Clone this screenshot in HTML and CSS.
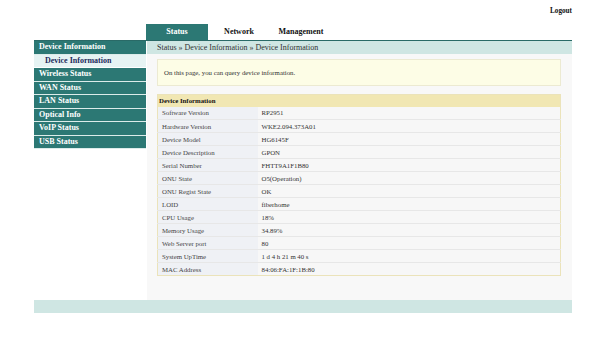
FILE: index.html
```html
<!DOCTYPE html>
<html lang="en">
<head>
  <meta charset="UTF-8">
  <title>Device Information</title>
  <link rel="stylesheet" href="styles.css">
</head>
<body>
  <div class="page">
    <div class="topbar">
      <a href="#" class="logout">Logout</a>
    </div>

    <div class="menu">
      <a href="#" class="tab active">Status</a>
      <a href="#" class="tab">Network</a>
      <a href="#" class="tab">Management</a>
    </div>

    <div class="frame">
      <div class="sidebar">
        <div class="side-head">Device Information</div>
        <div class="side-sub">Device Information</div>
        <div class="side-item">Wireless Status</div>
        <div class="side-item">WAN Status</div>
        <div class="side-item">LAN Status</div>
        <div class="side-item">Optical Info</div>
        <div class="side-item">VoIP Status</div>
        <div class="side-item">USB Status</div>
      </div>

      <div class="main">
        <div class="crumb">Status &raquo; Device Information &raquo; Device Information</div>
        <div class="content">
          <div class="notice">On this page, you can query device information.</div>

          <table class="info">
            <tr><th colspan="2">Device Information</th></tr>
            <tr><td class="lbl">Software Version</td><td>RP2951</td></tr>
            <tr><td class="lbl">Hardware Version</td><td>WKE2.094.373A01</td></tr>
            <tr><td class="lbl">Device Model</td><td>HG6145F</td></tr>
            <tr><td class="lbl">Device Description</td><td>GPON</td></tr>
            <tr><td class="lbl">Serial Number</td><td>FHTT9A1F1B80</td></tr>
            <tr><td class="lbl">ONU State</td><td>O5(Operation)</td></tr>
            <tr><td class="lbl">ONU Regist State</td><td>OK</td></tr>
            <tr><td class="lbl">LOID</td><td>fiberhome</td></tr>
            <tr><td class="lbl">CPU Usage</td><td>18%</td></tr>
            <tr><td class="lbl">Memory Usage</td><td>34.89%</td></tr>
            <tr><td class="lbl">Web Server port</td><td>80</td></tr>
            <tr><td class="lbl">System UpTime</td><td>1 d 4 h 21 m 40 s</td></tr>
            <tr><td class="lbl">MAC Address</td><td>84:06:FA:1F:1B:80</td></tr>
          </table>
        </div>
      </div>
    </div>

    <div class="footer"></div>
  </div>
</body>
</html>
```

FILE: styles.css
```css
:root {
  --teal: #2c7874;
  --teal-dark: #2a6a67;
  --teal-light: #cfe6e3;
  --sub-bg: #e6f3f3;
  --navy: #1d2b5c;
  --panel: #f8f8f8;
  --gold: #f1e7b3;
  --gold-border: #ebe3ba;
  --notice: #fdfde6;
  --text: #333;
}

* {
  margin: 0;
  padding: 0;
  box-sizing: border-box;
}

body {
  font-family: "Liberation Serif", "Times New Roman", serif;
  background: #fff;
  color: var(--text);
}

a {
  text-decoration: none;
}

.page {
  width: 538px;
  margin-left: 34px;
}

.topbar {
  height: 24px;
  display: flex;
  justify-content: flex-end;
  align-items: flex-start;
  padding-top: 7px;
}

.logout {
  font-size: 7.2px;
  font-weight: bold;
  color: #111;
}

.menu {
  display: flex;
  height: 17px;
  padding-left: 112px;
  border-bottom: 1px solid var(--teal-dark);
}

.tab {
  width: 62px;
  height: 16px;
  line-height: 16px;
  text-align: center;
  font-size: 8px;
  font-weight: bold;
  color: #111;
}

.tab.active {
  background: var(--teal);
  color: #fff;
}

.frame {
  display: flex;
  height: 259px;
}

.sidebar {
  width: 112px;
  flex-shrink: 0;
  margin-right: 1px;
}

.side-head,
.side-sub,
.side-item {
  height: 13.5px;
  line-height: 12.5px;
  border-bottom: 1px solid #dcecea;
  font-size: 8px;
  font-weight: bold;
  padding-left: 5px;
  color: #fff;
  background: var(--teal);
}

.side-sub {
  background: var(--sub-bg);
  color: var(--navy);
  padding-left: 11px;
  border-bottom-color: #fff;
}

.main {
  flex: 1;
  display: flex;
  flex-direction: column;
}

.crumb {
  height: 13px;
  line-height: 13px;
  background: var(--teal-light);
  font-size: 8px;
  color: #333;
  padding-left: 10px;
}

.content {
  flex: 1;
  background: var(--panel);
  padding: 5px 11px 0 10px;
}

.notice {
  height: 27px;
  line-height: 25px;
  background: var(--notice);
  border: 1px solid #ecead2;
  font-size: 6.8px;
  color: #333;
  padding-left: 6px;
  margin-bottom: 8px;
}

.info {
  width: 100%;
  border-collapse: collapse;
  border: 1px solid var(--gold-border);
  font-size: 6.8px;
  color: #333;
}

.info th {
  height: 12px;
  background: var(--gold);
  text-align: left;
  font-weight: bold;
  color: #111;
  padding-left: 1px;
}

.info td {
  height: 13px;
  padding: 0 4px;
  background: #f7f7f7;
  border-bottom: 1px solid #e7e7e7;
}

.info td.lbl {
  width: 100px;
  background: #eff1f5;
  color: #444;
}

.info tr:last-child td {
  border-bottom: none;
}

.footer {
  height: 13px;
  background: var(--teal-light);
}
```
